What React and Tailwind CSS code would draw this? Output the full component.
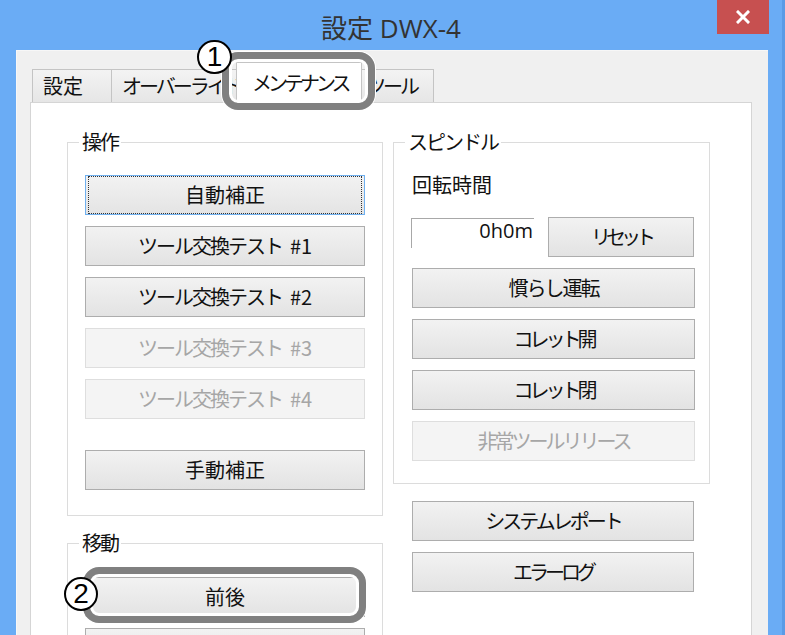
import React from "react";

const JP = "font-['Noto_Sans_CJK_JP',sans-serif]";

function Btn({ children, variant = "normal", track = "", className = "" }) {
  const base =
    "shrink-0 flex items-center justify-center h-[40px] text-[20px] leading-none whitespace-nowrap border";
  const v =
    variant === "disabled"
      ? "bg-[#f4f4f4] border-[#dedede] text-[#a6a6a6]"
      : variant === "focus"
      ? "bg-gradient-to-b from-[#f2f2f2] to-[#e4e4e4] border-[#6fb0ef] text-[#111]"
      : "bg-gradient-to-b from-[#f2f2f2] to-[#e3e3e3] border-[#adadad] text-[#111]";
  return (
    <div className={`${base} ${v} ${className}`}>
      {variant === "focus" ? (
        <div className="flex items-center justify-center w-full h-full m-[2px] border border-dotted border-[#333]">
          <span className={track}>{children}</span>
        </div>
      ) : (
        <span className={track}>{children}</span>
      )}
    </div>
  );
}

function ToolTest({ n, variant }) {
  return (
    <Btn variant={variant}>
      <span className="tracking-[-2px]">ツール交換テスト</span>
      <span className="ml-[8px]">#{n}</span>
    </Btn>
  );
}

function Group({ label, className = "", children }) {
  return (
    <div className={`relative shrink-0 border border-[#dcdcdc] ${className}`}>
      <span className="absolute -top-[14px] left-[11px] bg-white px-[3px] text-[20px] leading-[26px] text-[#111] tracking-[-2px]">
        {label}
      </span>
      {children}
    </div>
  );
}

function Circle({ n, className }) {
  return (
    <div
      className={`absolute flex items-center justify-center rounded-full border-[2.5px] border-black bg-white text-black font-['Liberation_Sans',sans-serif] text-[28px] leading-none ${className}`}
    >
      {n}
    </div>
  );
}

export default function App() {
  return (
    <div className={`relative w-[785px] h-[635px] overflow-hidden bg-[#6aacf5] border-r-[3px] border-[#5a9be6] ${JP}`}>
      {/* title bar */}
      <div className="relative h-[50px] flex items-center justify-center pt-[6px]">
        <span className="text-[26px] text-[#333] font-['Open_Sans','Noto_Sans_CJK_JP',sans-serif]">
          設定 DWX-4
        </span>
        <div className="absolute right-[13px] top-0 w-[52px] h-[34px] bg-[#c75050] flex items-center justify-center">
          <svg width="14" height="14" viewBox="0 0 14 14">
            <path d="M2 2 L12 12 M12 2 L2 12" stroke="white" strokeWidth="3" strokeLinecap="square" />
          </svg>
        </div>
      </div>

      {/* client area */}
      <div className="ml-[16px] w-[752px] h-[585px] overflow-hidden bg-[#f0f0f0] border-t border-l border-[#f7f7f7]">
        {/* tabs */}
        <div className="flex items-end h-[40px] mt-[11px] pl-[15px]">
          <div className="w-[80px] h-[33px] border border-b-0 border-[#c4c4c4] bg-gradient-to-b from-[#f3f3f3] to-[#e6e6e6] pl-[10px] text-[20px] leading-[31px] text-[#111] overflow-hidden whitespace-nowrap">
            設定
          </div>
          <div className="w-[126px] h-[33px] border border-b-0 border-l-0 border-[#c4c4c4] bg-gradient-to-b from-[#f3f3f3] to-[#e6e6e6] pl-[10px] text-[20px] leading-[31px] text-[#111] overflow-hidden whitespace-nowrap tracking-[-3px]">
            オーバーライド
          </div>
          <div className="relative z-10 -mx-[2px] -mb-px w-[126px] h-[41px] border border-b-0 border-[#c4c4c4] bg-white pl-[15px] text-[20px] leading-[40px] text-[#111] whitespace-nowrap tracking-[-4px]">
            メンテナンス
          </div>
          <div className="w-[74px] h-[33px] border border-b-0 border-l-0 border-[#c4c4c4] bg-gradient-to-b from-[#f3f3f3] to-[#e6e6e6] pl-[6px] text-[20px] leading-[31px] text-[#111] overflow-hidden whitespace-nowrap tracking-[-3px]">
            ツール
          </div>
        </div>

        {/* panel */}
        <div className="ml-[13px] w-[722px] h-[560px] bg-white border border-b-0 border-[#d5d5d5] pl-[36px] pt-[39px] flex items-start gap-[10px]">
          {/* left column */}
          <div className="shrink-0 flex flex-col w-[316px]">
            <Group label="操作" className="h-[374px] pt-[32px] px-[17px] flex flex-col gap-[11px]">
              <Btn variant="focus">自動補正</Btn>
              <ToolTest n="1" />
              <ToolTest n="2" />
              <ToolTest n="3" variant="disabled" />
              <ToolTest n="4" variant="disabled" />
              <Btn className="mt-[20px]">手動補正</Btn>
            </Group>
            <Group label="移動" className="mt-[27px] h-[200px] pt-[33px] px-[17px] flex flex-col gap-[11px]">
              <Btn>前後</Btn>
              <Btn />
            </Group>
          </div>

          {/* right column */}
          <div className="shrink-0 flex flex-col w-[317px]">
            <Group label="スピンドル" className="h-[342px] pt-[29px] pl-[18px] pr-[14px] flex flex-col">
              <span className="text-[20px] leading-[26px] text-[#111]">回転時間</span>
              <div className="mt-[19px] flex items-start">
                <div className="-ml-px mt-px w-[123px] h-[30px] border-t border-l border-[#a8a8a8] bg-white text-right pr-[1px] text-[20px] leading-[24px] text-[#111] font-['Open_Sans',sans-serif]">
                  0h0m
                </div>
                <Btn className="ml-[14px] w-[146px]" track="tracking-[-5px]">リセット</Btn>
              </div>
              <div className="mt-[11px] flex flex-col gap-[11px]">
                <Btn track="tracking-[-2px]">慣らし運転</Btn>
                <Btn track="tracking-[-4px]">コレット開</Btn>
                <Btn track="tracking-[-4px]">コレット閉</Btn>
                <Btn variant="disabled" track="tracking-[-3px]">非常ツールリリース</Btn>
              </div>
            </Group>
            <div className="mt-[17px] ml-[19px] w-[282px] flex flex-col gap-[11px]">
              <Btn track="tracking-[-3px]">システムレポート</Btn>
              <Btn track="tracking-[-4px]">エラーログ</Btn>
            </div>
          </div>
        </div>
      </div>

      {/* annotations */}
      <div className="absolute left-[222px] top-[52px] w-[153px] h-[58px] rounded-[16px] border-[7px] border-[#808080] shadow-[inset_0_0_0_3px_white,0_0_0_1px_white] z-20" />
      <Circle n="1" className="left-[197px] top-[40px] w-[35px] h-[34px] z-30" />
      <div className="absolute left-[83px] top-[567px] w-[283px] h-[56px] rounded-[16px] border-[7px] border-[#808080] shadow-[inset_0_0_0_3px_white,0_0_0_1px_white] z-20" />
      <Circle n="2" className="left-[64px] top-[577px] w-[34px] h-[34px] z-30" />
    </div>
  );
}
